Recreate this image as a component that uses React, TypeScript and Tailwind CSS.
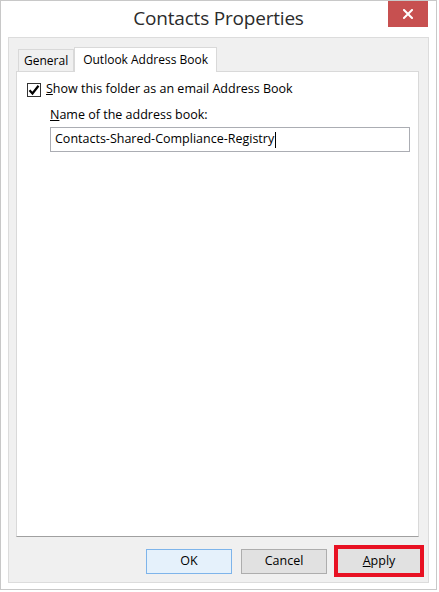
export default function App() {
  const ui = { fontFamily: '"Open Sans", "Noto Sans", sans-serif' };

  return (
    <div className="w-[439px] h-[592px] bg-white" style={ui}>
      <div className="w-[437px] h-[590px] border border-[#c8c8c8] bg-white flex flex-col">
        {/* title bar */}
        <div className="relative h-[36px] flex items-center justify-center shrink-0">
          <span className="text-[19px] text-[#2b2b2b] tracking-[-0.2px] mt-[-2px]">Contacts Properties</span>
          <div className="absolute top-0 right-[8px] w-[40px] h-[26px] bg-[#c75050] flex items-center justify-center">
            <svg width="10" height="10" viewBox="0 0 10 10">
              <path d="M1 1 L9 9 M9 1 L1 9" stroke="white" strokeWidth="2" strokeLinecap="square" />
            </svg>
          </div>
        </div>

        {/* client area */}
        <div className="flex-1 mx-[7px] mb-[6px] border border-[#dcdcdc] bg-[#f0f0f0] flex flex-col pl-[7px] pr-[9px] pt-[8px]">
          <div className="flex items-end h-[25px] pl-[2px]">
            <div className="h-[22px] px-[5px] border border-b-0 border-[#d9d9d9] bg-[#f0f0f0] text-[12px] text-black flex items-center">
              General
            </div>
            <div className="h-[25px] px-[8px] border border-b-0 border-[#d9d9d9] bg-white text-[12px] text-black flex items-center mb-[-1px] relative z-10">
              Outlook Address Book
            </div>
          </div>
          <div className="h-[466px] border border-[#d9d9d9] border-b-[#a0a0a0] bg-white pt-[10px]">
            <div className="flex items-center pl-[10px] h-[15px]">
              <div className="w-[14px] h-[14px] border border-[#333] bg-white flex items-center justify-center">
                <svg width="12" height="12" viewBox="0 0 12 12">
                  <path d="M1.5 6.2 L4.5 9.5 L10.5 1.8" fill="none" stroke="#000" strokeWidth="2.2" />
                </svg>
              </div>
              <span className="ml-[5px] text-[12.5px] text-black">
                <span className="underline">S</span>how this folder as an email Address Book
              </span>
            </div>
            <div className="pl-[33px] mt-[10px] text-[12.5px] text-black leading-[16px]">
              <span className="underline">N</span>ame of the address book:
            </div>
            <div className="ml-[33px] mt-[4px] w-[360px] h-[25px] border border-[#abadb3] bg-white flex items-center pl-[4px] text-[12.5px] text-black">
              Contacts-Shared-Compliance-Registry
              <span className="inline-block w-px h-[16px] bg-black ml-[1px]"></span>
            </div>
          </div>
          <div className="flex items-center mt-[8px]">
            <div className="shrink-0 ml-[130px] w-[86px] h-[25px] border border-[#7eb4ea] bg-[#e5f1fb] flex items-center justify-center text-[12.5px] text-black">
              OK
            </div>
            <div className="shrink-0 ml-[9px] w-[86px] h-[25px] border border-[#adadad] bg-[#e1e1e1] flex items-center justify-center text-[12.5px] text-black">
              Cancel
            </div>
            <div className="shrink-0 ml-[7px] w-[90px] h-[32px] border-[4px] border-[#e81123] bg-[#e1e1e1] flex items-center justify-center text-[12.5px] text-black">
              <span><span className="underline">A</span>pply</span>
            </div>
          </div>
        </div>
      </div>
    </div>
  );
}
